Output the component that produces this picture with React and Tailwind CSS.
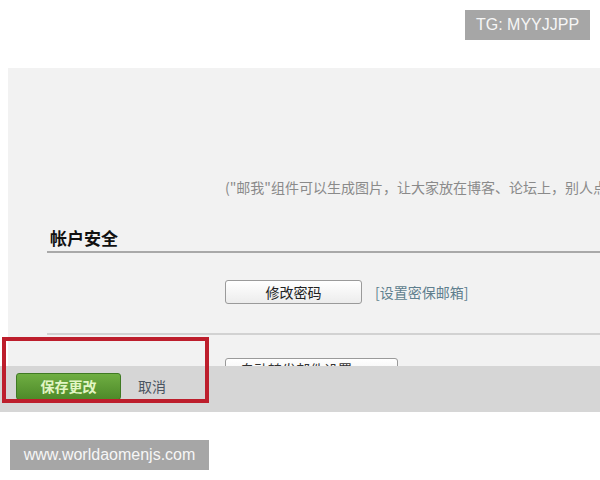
export default function App() {
  const cjk = { fontFamily: '"Noto Sans CJK SC", "Noto Sans", sans-serif' };
  return (
    <div className="relative w-[600px] h-[480px] bg-white overflow-hidden" style={cjk}>
      {/* top watermark */}
      <div className="h-[68px] flex justify-end items-start pt-[10px] pr-[10px]">
        <div className="h-[30px] w-[125px] bg-[#a6a6a6] text-[#f6f6f6] text-[16px] flex items-center justify-center" style={{ fontFamily: '"Liberation Sans", Arial, sans-serif' }}>
          TG: MYYJJPP
        </div>
      </div>

      {/* settings panel */}
      <div className="ml-[8px] h-[298px] bg-[#f2f2f2] overflow-hidden pt-[110px]">
        <div className="pl-[217px] whitespace-nowrap text-[14px] leading-[18px] text-[#8a8a8a]">
          ("邮我"组件可以生成图片，让大家放在博客、论坛上，别人点击就可以给你发邮件。)
        </div>

        <div className="ml-[39px] mt-[30px] pl-[3px] pb-[1px] border-b-2 border-[#a9a9a9]">
          <div className="text-[17px] leading-[24px] font-bold text-[#111]">帐户安全</div>
        </div>

        <div className="pl-[217px] mt-[27px] flex items-center gap-[13px]">
          <div className="w-[137px] h-[24px] rounded-[3px] border border-[#9a9a9a] bg-gradient-to-b from-white to-[#ececec] flex items-center justify-center text-[14px] text-[#222]">
            修改密码
          </div>
          <div className="text-[14px] text-[#5f7f8e]">[设置密保邮箱]</div>
        </div>

        <div className="ml-[39px] mt-[29px] border-b-2 border-[#d2d2d2]"></div>

        <div className="pl-[217px] mt-[23px]">
          <div className="w-[173px] h-[24px] rounded-[3px] border border-[#9a9a9a] bg-gradient-to-b from-white to-[#ececec] flex items-start pt-[3px] pl-[14px] text-[14px] leading-[14px] text-[#333]">
            自动转发邮件设置
          </div>
        </div>
      </div>

      {/* bottom action bar */}
      <div className="h-[46px] bg-[#d6d6d6] flex items-start pt-[7px] pl-[16px]">
        <div className="w-[105px] h-[27px] rounded-[3px] border border-[#3f7a23] bg-gradient-to-b from-[#6fae42] to-[#4e8a29] flex items-center justify-center text-[14px] font-bold text-[#e2f6c4]">
          保存更改
        </div>
        <div className="ml-[17px] h-[27px] flex items-center text-[14px] text-[#4a5561]">取消</div>
      </div>

      {/* bottom watermark */}
      <div className="mt-[28px] ml-[10px] w-[199px] h-[30px] bg-[#a6a6a6] text-[#f6f6f6] text-[16px] flex items-center justify-center" style={{ fontFamily: '"Liberation Sans", Arial, sans-serif' }}>
        www.worldaomenjs.com
      </div>

      {/* red annotation box */}
      <div className="absolute left-[2px] top-[337px] w-[207px] h-[66px] border-4 border-[#bd1e2c]"></div>
    </div>
  );
}
